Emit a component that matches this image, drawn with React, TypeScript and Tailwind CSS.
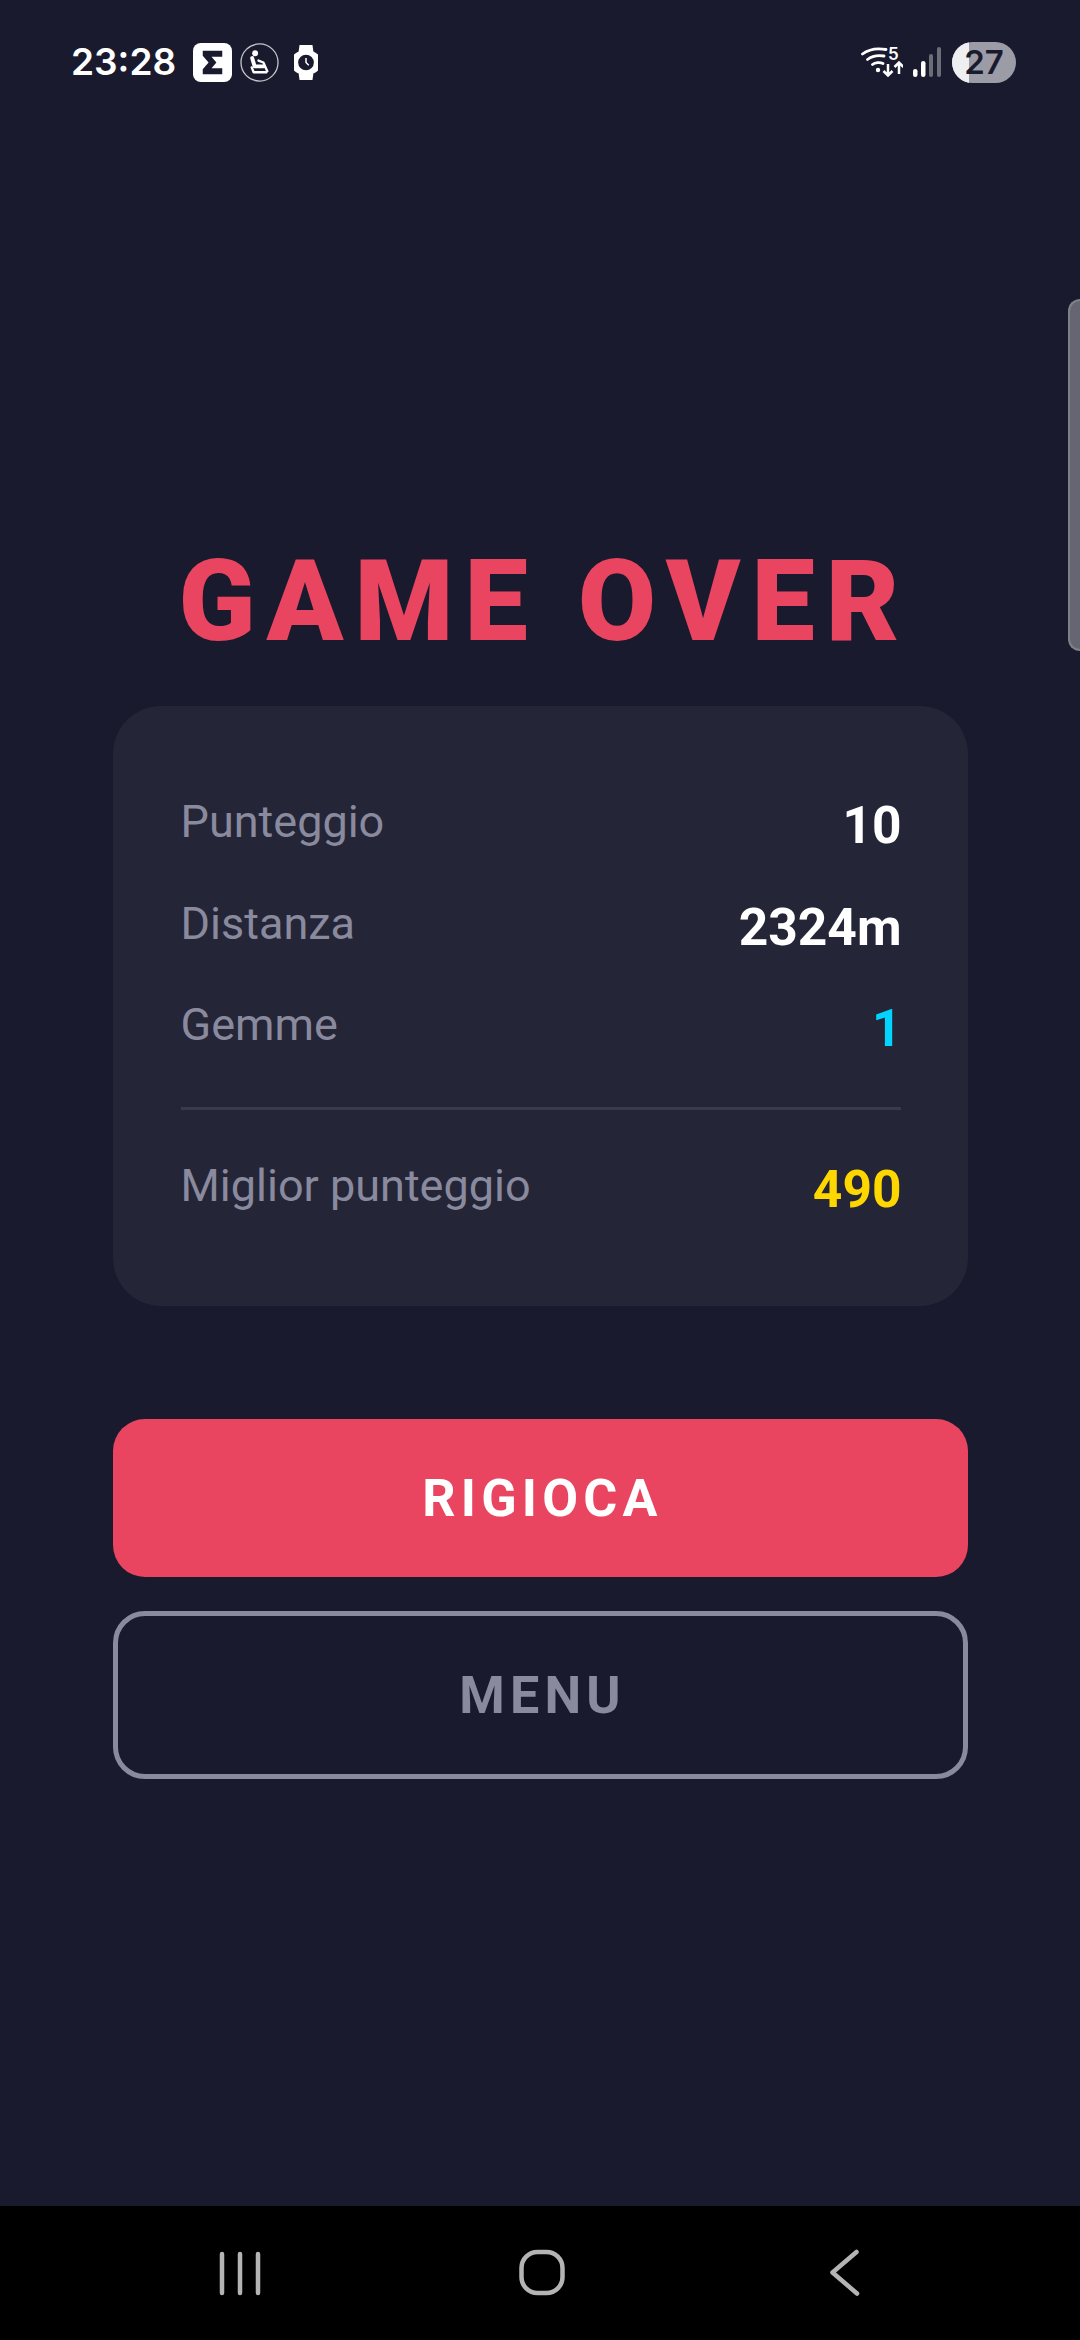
export default function App() {
  const Row = ({ label, value, color, cls }: { label: string; value: string; color: string; cls: string }) => (
    <div className={`flex items-start justify-between h-[62px] ${cls}`}>
      <span className="text-[45px] leading-[54px] text-[#8a8a9e]">{label}</span>
      <span className={`text-[51.5px] leading-[62px] font-bold ${color}`}>{value}</span>
    </div>
  );
  return (
    <div className="w-[1080px] h-[2340px] bg-[#1a1a2e] flex flex-col overflow-hidden relative font-['Roboto',sans-serif]">
      <div className="h-[124px] shrink-0 flex items-center justify-between pl-[71px] pr-[64px]">
        <div className="flex items-center">
          <span className="w-[122px] text-[37px] font-semibold text-white font-['Inter',sans-serif] whitespace-nowrap">23:28</span>
          <svg width="39" height="39" viewBox="0 0 40 40">
            <rect width="40" height="40" rx="8" fill="#fff" />
            <path d="M10 8H30V14H19L24 20L19 26H30V32H10V27L16 20L10 13Z" fill="#1a1a2e" />
          </svg>
          <svg className="ml-[8px]" width="39" height="39" viewBox="0 0 40 40" fill="none">
            <circle cx="20" cy="20" r="19" stroke="#c8c8cc" strokeWidth="1.3" />
            <circle cx="15.5" cy="10.5" r="3" fill="#fff" />
            <path d="M12.5 15.5L15 24H24" stroke="#fff" strokeWidth="4" strokeLinecap="round" strokeLinejoin="round" />
            <path d="M19 18L24 20L28 29M12 25L14 30H27" stroke="#fff" strokeWidth="2.4" strokeLinecap="round" strokeLinejoin="round" />
          </svg>
          <svg className="ml-[15px]" width="24" height="37" viewBox="0 0 26 38" fill="none">
            <path d="M6 0H20L21 7A13 13 0 0 1 21 31L20 38H6L5 31A13 13 0 0 1 5 7Z" fill="#fff" />
            <circle cx="13" cy="19" r="8.5" fill="#1a1a2e" />
            <path d="M13 14V19L16 22" stroke="#fff" strokeWidth="1.6" />
          </svg>
        </div>
        <div className="flex items-center">
          <div className="relative w-[42px] h-[30px]">
            <svg className="absolute inset-0" width="42" height="30" viewBox="0 0 42 30" fill="none">
              <path d="M1.5 7C8 2 17 1 25 2.5M6.5 12.5C11 9 17 8 23 9M11.5 17.5C14 15.5 19 15 22 16.5" stroke="#fff" strokeWidth="2.8" strokeLinecap="round" />
              <circle cx="17" cy="23" r="2.2" fill="#fff" />
              <path d="M27 17V28M22.5 24L27 28.5L31.5 24M38 27V15.5M33.5 20L38 15.5L42.5 20" stroke="#fff" strokeWidth="2.5" />
            </svg>
            <span className="absolute left-[27px] top-[-1px] text-[17px] leading-[17px] font-semibold text-white font-['Inter',sans-serif]">5</span>
          </div>
          <svg className="ml-[10px]" width="28" height="30" viewBox="0 0 28 30">
            <rect x="0" y="22" width="4.5" height="8" rx="2.2" fill="#fff" />
            <rect x="8" y="14" width="4.5" height="16" rx="2.2" fill="#fff" />
            <rect x="16" y="7" width="4" height="23" rx="2" fill="#6d6d78" />
            <rect x="24" y="0" width="4" height="30" rx="2" fill="#6d6d78" />
          </svg>
          <div className="ml-[11px] w-[64px] h-[41px] rounded-full bg-[#9c9ca6] overflow-hidden relative flex items-center justify-center">
            <div className="absolute left-0 top-0 bottom-0 w-[17px] bg-[#efeff1]" />
            <span className="relative text-[33px] leading-[41px] font-semibold text-[#1a1a2e] font-['Inter',sans-serif]">27</span>
          </div>
        </div>
      </div>

      <main className="flex-1 flex flex-col items-center pt-[408px]">
        <h1 className="pl-[9px] text-[113px] leading-[140px] font-black tracking-[11px] text-[#e94560] whitespace-nowrap">GAME OVER</h1>
        <div className="mt-[34px] w-[855px] h-[600px] rounded-[48px] bg-[#252538] pl-[68px] pr-[66px] pt-[89px]">
          <Row label="Punteggio" value="10" color="text-white" cls="" />
          <Row label="Distanza" value="2324m" color="text-white" cls="mt-[39.5px]" />
          <Row label="Gemme" value="1" color="text-[#00d4ff]" cls="mt-[39.5px]" />
          <div className="h-[3px] bg-[#3a3a4e] mt-[47px] mr-[1px]" />
          <Row label="Miglior punteggio" value="490" color="text-[#ffd700]" cls="mt-[49px]" />
        </div>
        <button className="mt-[113px] w-[855px] h-[158px] rounded-[32px] bg-[#e94560] text-white text-[52px] font-bold tracking-[5.2px] pl-[5px] pt-[2px]">RIGIOCA</button>
        <button className="mt-[34px] w-[855px] h-[168px] rounded-[32px] border-[5.5px] border-[#8a8a9e] text-[#8a8a9e] text-[52px] font-bold tracking-[5.2px] pl-[5px] pt-[2px]">MENU</button>
      </main>

      <div className="h-[134px] shrink-0 bg-black relative">
        <svg className="absolute inset-0" width="1080" height="134" viewBox="0 0 1080 134" fill="none" stroke="#b4b4b4" strokeLinecap="round">
          <path d="M222 48V87M240 48V87M258 48V87" strokeWidth="4.5" />
          <rect x="521.5" y="46" width="41" height="41" rx="16" strokeWidth="4.5" />
          <path d="M856.5 46L832.5 66.5L857 87.5" strokeWidth="4.5" strokeLinejoin="round" />
        </svg>
      </div>

      <div className="absolute right-0 top-[299px] w-[12px] h-[352px] rounded-l-[12px] bg-[#666672] border-l-[2px] border-y-[2px] border-[#808088]" />
    </div>
  );
}
